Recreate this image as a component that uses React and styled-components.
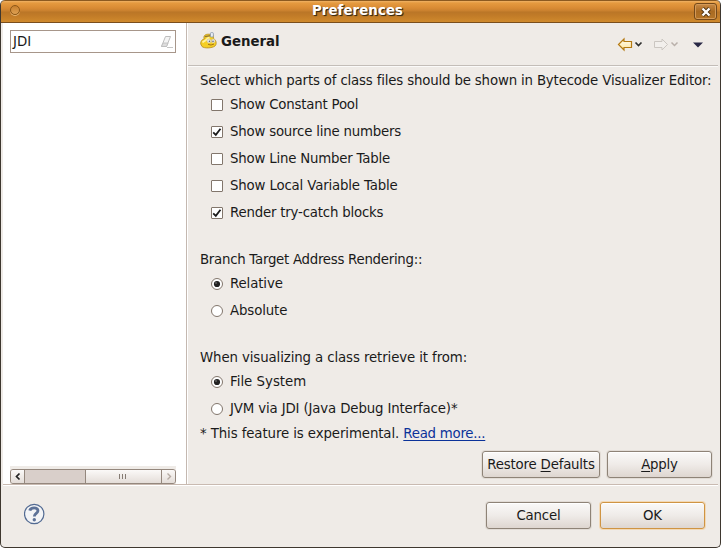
import React from "react";
import styled, { createGlobalStyle } from "styled-components";

const Global = createGlobalStyle`
  *{box-sizing:border-box}
  body{margin:0;background:#fff;overflow:hidden}
`;

const Window = styled.div`
  width:721px;height:548px;display:flex;flex-direction:column;
  background:#efebe7;border:1px solid #3e372f;border-radius:5px;overflow:hidden;
  font:13.33px "DejaVu Sans",sans-serif;color:#1a1a1a;
  border-top:0;
`;
const TitleBar = styled.header`
  height:23px;margin:0 -1px;flex:none;display:grid;grid-template-columns:34px 1fr 40px;align-items:center;
  border:1px solid #8c5a20;border-bottom-color:#7a4e1c;border-radius:5px 5px 0 0;
  background:linear-gradient(#f0b264 0,#e59a3f 2px,#d98b34 7px,#c8802e 10px,#ba7627 11px,#c27c28 15px,#d08a2d 21px);
`;
const Orb = styled.span`
  width:10px;height:10px;margin:-3px 0 0 9px;border:1px solid #8c5819;border-radius:50%;
  background:linear-gradient(#c8802e,#dda052);box-shadow:0 1px 0 #e8b571;
`;
const Title = styled.h1`
  margin:0;padding-bottom:2px;text-align:center;font-size:13.33px;line-height:18px;color:#fff;
  text-shadow:1px 1px 1px #3c2a12,1px 1px 0 #5b4223;letter-spacing:${p => p.$ls || 0}px;
`;
const Close = styled.button`
  width:23px;height:17px;margin:0 0 0 14px;padding:0;display:grid;place-items:center;
  border:1px solid #74491a;border-radius:3px;background:linear-gradient(#c98a45,#a96a22 50%,#b57527);
  box-shadow:inset 0 0 0 1px #d49a58;
`;
const Main = styled.div`height:461px;margin:0 2px;display:flex;flex:none;`;
const Sidebar = styled.aside`
  width:184px;flex:none;height:461px;padding:7px 10px 0 7px;display:flex;flex-direction:column;justify-content:space-between;
  background:#fff;border-right:1px solid #c4b8b0;
`;
const Search = styled.div`
  width:166px;height:23px;padding:0 1px 0 2px;display:flex;align-items:center;justify-content:space-between;
  border:1px solid #a7968a;background:#fff;
`;
const Track = styled.div`width:166px;height:18px;padding-top:3px;background:#efebe7;display:flex;`;
const Bar = styled.div`
  width:166px;height:15px;display:flex;border:1px solid #94877d;border-radius:3px;background:#d9cfca;overflow:hidden;
`;
const BarPart = styled.div`
  width:${p => p.$w}px;display:grid;place-items:center;
  background:${p => p.$empty ? "#d9cfca" : "linear-gradient(#fbf9f8,#e4ddd8)"};
  border-right:${p => p.$last ? 0 : 1}px solid #94877d;
`;
const Pane = styled.section`flex:1;min-width:0;display:flex;flex-direction:column;border-left:1px solid #fff;`;
const Heading = styled.div`
  height:44px;padding:9px 11px 0 12px;display:flex;align-items:flex-start;
  border-bottom:1px solid #fbfaf9;box-shadow:inset 0 -1px #c3bdb8;
`;
const HeadText = styled.h2`margin:1px 0 0 4px;font-size:13.33px;line-height:18px;flex:1;letter-spacing:${p => p.$ls || 0}px;`;
const Tools = styled.div`display:flex;margin-top:4px;`;
const Body = styled.div`padding:1px 0 0 12px;display:flex;flex-direction:column;`;
const Group = styled.div`display:flex;flex-direction:column;margin-bottom:${p => p.$gap}px;`;
const Label = styled.div`height:23px;line-height:${p => p.$note ? 23 : 25}px;white-space:nowrap;`;
const Row = styled.label`height:27px;padding-left:10px;display:flex;align-items:center;gap:6px;white-space:nowrap;`;
const Text = styled.span`letter-spacing:${p => p.$ls || 0}px;white-space:pre;`;
const Mark = styled.svg`display:block;flex:none;`;
const Link = styled.a`color:#0b3299;text-decoration:underline;text-underline-offset:2px;letter-spacing:${p => p.$ls || 0}px;`;
const Actions = styled.div`margin-top:6px;padding-right:6px;display:flex;justify-content:flex-end;gap:7px;`;
const Button = styled.button`
  width:${p => p.$w}px;height:27px;padding:0 0 1px;font:inherit;color:inherit;white-space:nowrap;letter-spacing:-.2px;
  border:1px solid ${p => p.$main ? "#cf9443" : "#8e8377"};border-radius:3px;
  background:linear-gradient(#faf9f8,#efebe8 50%,#ded6d0);
  box-shadow:0 0 0 1px ${p => p.$main ? "#f3d9b5" : "#e2dcd6"},inset 0 1px #fff;
`;
const Key = styled.span`text-decoration:underline;text-underline-offset:2px;`;
const Footer = styled.footer`
  height:63px;flex:none;margin:0 2px;padding:17px 13px 0 21px;display:flex;gap:9px;
  border-top:1px solid #c9bab1;box-shadow:inset 0 1px #fff;
`;
const Grow = styled.span`flex:1;`;

function Check({ on }) {
  return (
    <Mark width="14" height="14" viewBox="0 0 14 14">
      <rect x="1.5" y="1.5" width="11" height="11" rx=".5" fill="#fff" stroke="#82766c" />
      {on && <path d="M3.2 7.3L5.8 9.8L10.5 3.7" fill="none" stroke="#1c1c1c" strokeWidth="1.8" />}
    </Mark>
  );
}
function Radio({ on }) {
  return (
    <Mark width="14" height="14" viewBox="0 0 14 14">
      <circle cx="7" cy="7" r="5.5" fill="#fff" stroke="#82766c" />
      {on && <><circle cx="7" cy="7" r="3.1" fill="#222" /><circle cx="6" cy="6" r=".8" fill="#888" /></>}
    </Mark>
  );
}
function Option({ radio, on, ls, children }) {
  return <Row>{radio ? <Radio on={on} /> : <Check on={on} />}<Text $ls={ls}>{children}</Text></Row>;
}
function Mascot() {
  return (
    <Mark width="17" height="17" viewBox="0 0 17 17">
      <path d="M.7 12C.5 9 2 7.5 4.3 7C3 4 5 2 9 2.2L13 3L13.6 6.5C16.5 8.5 17 12 15 14C12 16.3 4 16.6 2 14.5Z" fill="#f5cf25" stroke="#b58d1c" strokeWidth=".8" />
      <path d="M2.5 10.5C4.5 8 6 9 7.5 6.5L9.5 5.5" stroke="#fff19a" strokeWidth="2" fill="none" />
      <path d="M4.8 4.6L10.5 3.6" stroke="#8f7338" strokeWidth="1.1" />
      <rect x="10.4" y=".6" width="3" height="4.4" rx="1" fill="#e9eef5" stroke="#8593a8" strokeWidth=".8" />
      <circle cx="9" cy="9" r="2" fill="#eef2f5" stroke="#c9b378" strokeWidth=".5" />
      <circle cx="13.2" cy="9" r="1.9" fill="#eef2f5" stroke="#c9b378" strokeWidth=".5" />
      <circle cx="9.4" cy="9.3" r=".8" fill="#505a70" /><circle cx="13" cy="9.3" r=".8" fill="#505a70" />
      <path d="M8 12.3Q11 14 14 12" stroke="#9a6810" strokeWidth=".9" fill="none" />
    </Mark>
  );
}
function NavIcons() {
  return (
    <Mark width="90" height="16" viewBox="0 0 90 16">
      <defs><linearGradient id="gold" x2="0" y2="1"><stop stopColor="#fffdf0" /><stop offset="1" stopColor="#ffe39a" /></linearGradient></defs>
      <path d="M1.5 8.5L7 3V5.5H14.5V11.5H7V14Z" fill="url(#gold)" stroke="#b57a12" strokeWidth="1.2" />
      <path d="M18.5 6.5L21.5 9.5L24.5 6.5" fill="none" stroke="#30302f" strokeWidth="1.7" />
      <path d="M50.5 8.5L45 3V5.5H37.5V11.5H45V14Z" fill="#f2efec" stroke="#cbc6c1" />
      <path d="M54.5 6.5L57.5 9.5L60.5 6.5" fill="none" stroke="#b9b0aa" strokeWidth="1.5" />
      <path d="M76 6.5H86L81 11.5Z" fill="#292846" />
    </Mark>
  );
}

export default function App() {
  return (
    <>
      <Global />
      <Window>
        <TitleBar>
          <Orb /><Title $ls={0.08}>Preferences</Title>
          <Close aria-label="Close">
            <Mark width="12" height="12" viewBox="0 0 12 12">
              <path d="M2.5 2.5L9.5 9.5M9.5 2.5L2.5 9.5" stroke="#4b3010" strokeWidth="4" />
              <path d="M2.5 2.5L9.5 9.5M9.5 2.5L2.5 9.5" stroke="#fff" strokeWidth="2.4" />
            </Mark>
          </Close>
        </TitleBar>
        <Main>
          <Sidebar>
            <Search>
              <Text>JDI</Text>
              <Mark width="14" height="14" viewBox="0 0 14 14">
                <path d="M5.5 1.5H10.5L6.5 11.5H1.5Z" fill="#f4f4f4" stroke="#bdbdbd" />
                <path d="M3 8H8L6.5 11.5H1.5Z" fill="#ddd" stroke="#bdbdbd" strokeWidth=".8" />
                <path d="M7 12.5H13" stroke="#c5c5c5" />
              </Mark>
            </Search>
            <Track><Bar>
              <BarPart $w={14}><Mark width="8" height="9" viewBox="0 0 8 9"><path d="M5.5 1.5L2.5 4.5L5.5 7.5" fill="none" stroke="#222" strokeWidth="1.7" /></Mark></BarPart>
              <BarPart $w={61} $empty />
              <BarPart $w={76}><Mark width="9" height="5" viewBox="0 0 9 5"><path d="M.5 0V5M3.5 0V5M6.5 0V5" stroke="#857b73" /></Mark></BarPart>
              <BarPart $w={13} $last><Mark width="8" height="9" viewBox="0 0 8 9"><path d="M2.5 1.5L5.5 4.5L2.5 7.5" fill="none" stroke="#b5aaa2" strokeWidth="1.4" /></Mark></BarPart>
            </Bar></Track>
          </Sidebar>
          <Pane>
            <Heading><Mascot /><HeadText>General</HeadText><Tools><NavIcons /></Tools></Heading>
            <Body>
              <Group $gap={21}>
                <Label><Text $ls={-0.165}>Select which parts of class files should be shown in Bytecode Visualizer Editor:</Text></Label>
                <Option ls={-0.2}>Show Constant Pool</Option>
                <Option on ls={-0.21}>Show source line numbers</Option>
                <Option ls={-0.2}>Show Line Number Table</Option>
                <Option ls={-0.16}>Show Local Variable Table</Option>
                <Option on ls={-0.2}>Render try-catch blocks</Option>
              </Group>
              <Group $gap={21}>
                <Label><Text $ls={-0.27}>Branch Target Address Rendering::</Text></Label>
                <Option radio on ls={-0.12}>Relative</Option>
                <Option radio ls={-0.12}>Absolute</Option>
              </Group>
              <Group $gap={0}>
                <Label><Text $ls={-0.11}>When visualizing a class retrieve it from:</Text></Label>
                <Option radio on>File System</Option>
                <Option radio ls={-0.14}>JVM via JDI (Java Debug Interface)*</Option>
                <Label $note><Text $ls={-0.1}>* This feature is experimental. </Text><Link $ls={-0.25}>Read more...</Link></Label>
              </Group>
            </Body>
            <Actions>
              <Button $w={118}>Restore <Key>D</Key>efaults</Button>
              <Button $w={105}><Key>A</Key>pply</Button>
            </Actions>
          </Pane>
        </Main>
        <Footer>
          <Mark width="22" height="23" viewBox="0 0 22 23">
            <circle cx="10.2" cy="12" r="9.7" fill="#f3f4f6" stroke="#526a92" strokeWidth="1.2" />
            <path d="M5.8 8.6C6.5 5.2 14.1 4.7 13.9 9C13.7 11.6 10.3 11.3 10.3 14.6" fill="none" stroke="#5d7298" strokeWidth="2.9" />
            <circle cx="10.3" cy="17.8" r="1.7" fill="#5d7298" />
          </Mark>
          <Grow />
          <Button $w={105}>Cancel</Button>
          <Button $w={105} $main>OK</Button>
        </Footer>
      </Window>
    </>
  );
}
